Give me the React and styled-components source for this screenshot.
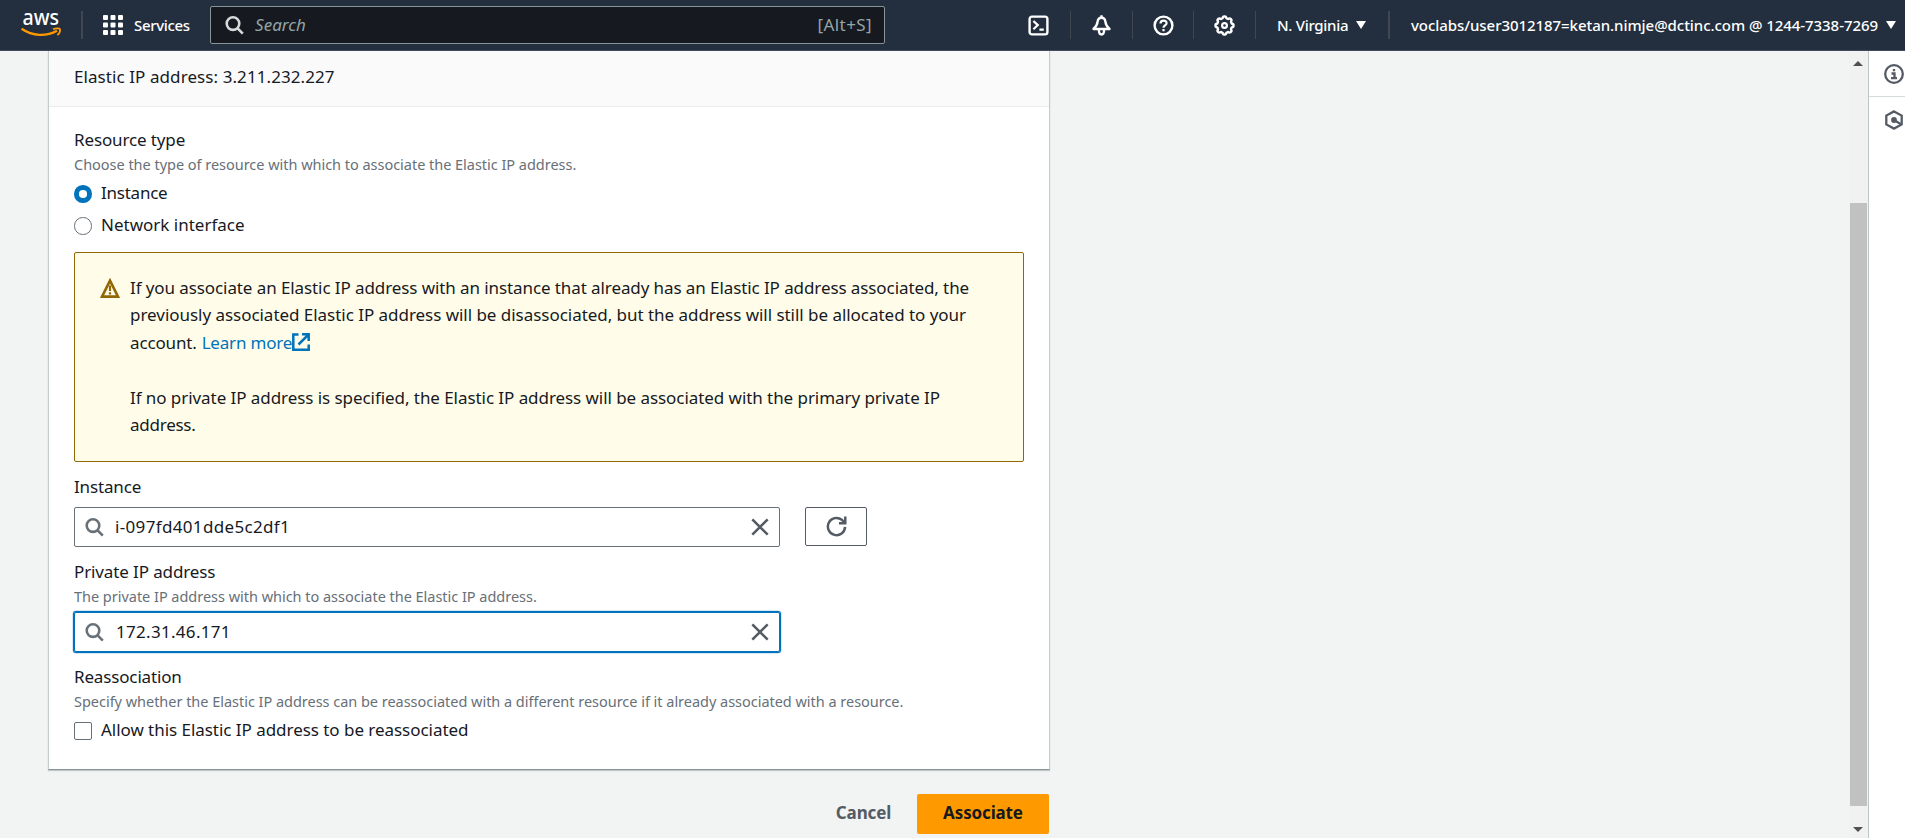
import React from 'react';
import styled, { createGlobalStyle, css } from 'styled-components';

const Global = createGlobalStyle`
  html, body { margin: 0; height: 100%; overflow: hidden; }
  * { box-sizing: border-box; }
  body { font-family: "Noto Sans", "Open Sans", sans-serif; font-size: 17px; line-height: 25px; color: #16191f; }
  button { font: inherit; }
`;

const Page = styled.div`
  display: flex;
  flex-direction: column;
  height: 838px;
  width: 1905px;
  overflow: hidden;
  background: #f2f3f3;
`;

/* Top navigation */
const TopBar = styled.header`
  display: flex;
  align-items: flex-start;
  height: 51px;
  flex: none;
  background: #232f3e;
  border-bottom: 1px solid #414d5c;
  color: #fff;
`;

const Logo = styled.svg`
  display: block;
  width: 41px;
  height: 34px;
  margin: 6px 19.5px 0 20.5px;
  overflow: visible;
`;

const LogoText = styled.text`
  font-family: "Noto Sans", sans-serif;
  font-size: 21.5px;
  font-weight: 500;
  fill: #fff;
`;

const Divider = styled.span`
  flex: none;
  width: ${(p) => p.$w || 1}px;
  height: 28px;
  margin-top: 11px;
  background: #414750;
`;

const ServicesButton = styled.button`
  display: flex;
  align-items: center;
  width: 127px;
  height: 50px;
  padding: 0 0 0 20px;
  border: 0;
  background: none;
  color: #fff;
  svg { flex: none; margin-right: 11px; }
`;

const NavText = styled.span`
  font-size: 15px;
  font-weight: 500;
  line-height: 24px;
  white-space: nowrap;
  letter-spacing: ${(p) => p.$ls || 0}px;
`;

const GlobalSearch = styled.div`
  display: flex;
  align-items: center;
  width: 675px;
  height: 38px;
  margin-top: 6px;
  padding: 0 12px 0 14px;
  background: #16191f;
  border: 1px solid #879596;
  border-radius: 2px;
  color: #95a5a6;
  svg { color: #d5dbdb; }
`;

const SearchHint = styled.span`
  flex: 1;
  padding: 0 0 2px 11px;
  font-style: italic;
  font-size: 17px;
  letter-spacing: 0.05px;
`;

const Shortcut = styled.span`
  padding-bottom: 2px;
  font-size: 17px;
  letter-spacing: 0.4px;
`;

const IconGroup = styled.div`
  display: flex;
  margin-left: 122px;
`;

const IconButton = styled.button`
  display: flex;
  align-items: center;
  justify-content: center;
  width: ${(p) => p.$w}px;
  height: 50px;
  padding: 1px 0 0;
  border: 0;
  background: none;
  color: #fff;
`;

const MenuButton = styled.button`
  display: flex;
  align-items: center;
  justify-content: space-between;
  width: ${(p) => p.$w}px;
  height: 50px;
  margin: 0 ${(p) => p.$right}px 0 21px;
  padding: 0;
  border: 0;
  background: none;
  color: #fff;
`;

/* Main area */
const Body = styled.div`
  display: flex;
  flex: 1;
  min-height: 0;
`;

const Content = styled.main`
  display: flex;
  flex-direction: column;
  flex: 1;
  padding-left: 48px;
`;

const Card = styled.section`
  width: 1002px;
  height: 719px;
  background: #fff;
  border: 1px solid #c5cccc;
  border-top: 0;
  border-bottom-color: #879596;
  box-shadow: 0 1px 1px rgba(0, 28, 36, 0.2);
`;

const CardHeader = styled.div`
  height: 56px;
  padding: 13px 25px 0;
  background: #fafafa;
  border-bottom: 1px solid #eaeded;
  letter-spacing: 0.08px;
`;

const CardBody = styled.div`
  display: flex;
  flex-direction: column;
  padding: 20px 25px 0;
`;

const FormField = styled.div`
  margin-top: ${(p) => p.$gap || 0}px;
`;

const Label = styled.div`
  height: 25px;
  white-space: nowrap;
  letter-spacing: ${(p) => p.$ls || 0}px;
`;

const Description = styled(Label)`
  font-size: 14.5px;
  color: #687078;
  letter-spacing: -0.026px;
`;

const Choice = styled.label`
  display: flex;
  align-items: flex-start;
  height: 25px;
  margin-top: ${(p) => p.$gap}px;
  white-space: nowrap;
  letter-spacing: ${(p) => p.$ls || 0}px;
`;

const Control = styled.span`
  width: 17.5px;
  height: 17.5px;
  margin: 5px 9.5px 0 0;
  background: #fff;
  border: 1px solid #687078;
  border-radius: ${(p) => (p.$round ? '50%' : '2px')};
  ${(p) => p.$checked && css`
    border: 5px solid #0073bb;
  `}
`;

const Alert = styled.div`
  display: flex;
  height: 210px;
  margin-top: 15px;
  padding: 20.6px 25px 0;
  background: #fffde9;
  border: 1px solid #906806;
  border-radius: 2px;
  line-height: 27.5px;
  svg { flex: none; }
`;

const AlertIcon = styled.span`
  width: 30px;
  padding-top: 4px;
`;

const AlertText = styled.div`
  p { margin: 0 0 27.5px; }
`;

const Line = styled.span`
  display: flex;
  align-items: center;
  height: 27.5px;
  white-space: nowrap;
  letter-spacing: ${(p) => p.$ls || 0}px;
`;

const Link = styled.a`
  display: flex;
  align-items: center;
  margin-left: 5px;
  color: #0073bb;
  letter-spacing: -0.19px;
`;

const InputRow = styled.div`
  display: flex;
  gap: 25px;
  margin-top: ${(p) => p.$gap}px;
`;

const SearchInput = styled.div`
  display: flex;
  align-items: center;
  width: 706px;
  height: 40px;
  padding: 0 10px;
  border: 1px solid #687078;
  border-radius: 2px;
  color: #687078;
  ${(p) => p.$focused && css`
    border-color: #0073bb;
    box-shadow: 0 0 0 1px #0073bb, 0 0 0 1.5px #a9cfe8;
  `}
`;

const Value = styled.span`
  flex: 1;
  padding: 0 0 2px ${(p) => p.$indent || 12}px;
  color: #16191f;
  letter-spacing: ${(p) => p.$ls}px;
`;

const RefreshButton = styled.button`
  display: flex;
  align-items: center;
  justify-content: center;
  width: 62px;
  height: 39px;
  padding: 0;
  background: #fff;
  border: 1px solid #545b64;
  border-radius: 2px;
  color: #545b64;
`;

const Actions = styled.div`
  display: flex;
  justify-content: flex-end;
  width: 1001px;
  margin-top: 24px;
`;

const ActionButton = styled.button`
  height: 40px;
  width: ${(p) => p.$w}px;
  padding: 0 0 3px;
  border: 0;
  border-radius: 2px;
  font-weight: 700;
  letter-spacing: -0.14px;
  color: ${(p) => (p.$primary ? '#16191f' : '#545b64')};
  background: ${(p) => (p.$primary ? '#ff9900' : 'transparent')};
`;

/* Scroll bar and help rail */
const Scrollbar = styled.div`
  display: flex;
  flex-direction: column;
  align-items: center;
  width: 19px;
  padding: 10px 1px 6px 0;
  background: #f1f1f1;
`;

const Thumb = styled.div`
  width: 17px;
  height: 603px;
  margin: 137px 0 auto;
  background: #c1c1c1;
`;

const Rail = styled.aside`
  width: 37px;
  background: #fff;
  border-left: 1px solid #bfc6c6;
  color: #545b64;
`;

const RailItem = styled.div`
  display: flex;
  justify-content: flex-end;
  height: 46px;
  padding: 13px 1px 0 0;
  ${(p) => p.$line && 'border-bottom: 1px solid #d5dbdb;'}
`;

const Caret = ({ up, w = 10, h = 8, fill = 'currentColor' }) => (
  <svg width={w} height={h} viewBox="0 0 10 8" preserveAspectRatio="none">
    <path d={up ? 'M0 8L5 0l5 8z' : 'M0 0h10L5 8z'} fill={fill} />
  </svg>
);

const Magnifier = () => (
  <svg width="19" height="19" viewBox="0 0 19 19" fill="none" stroke="currentColor" strokeWidth="2.6">
    <circle cx="8" cy="7.6" r="6.3" />
    <path d="M12.4 12.2l5.400 5.400" />
  </svg>
);

const Cross = () => (
  <svg width="18" height="18" viewBox="0 0 18 18" stroke="#545b64" strokeWidth="2.600">
    <path d="M1.300 1.300l15.400 15.400M16.700 1.300L1.300 16.700" />
  </svg>
);

const gearPath = (() => {
  const pts = [];
  for (let i = 0; i < 96; i += 1) {
    const a = (i / 96) * Math.PI * 2;
    const wave = Math.max(-1, Math.min(1, Math.cos(a * 8) * 1.7));
    const r = 8.2 + wave * 0.8;
    pts.push(`${(10.5 + r * Math.cos(a)).toFixed(2)} ${(10.5 + r * Math.sin(a)).toFixed(2)}`);
  }
  return `M${pts.join('L')}Z`;
})();

const NavIcon = ({ children }) => (
  <svg width="21" height="21" viewBox="0 0 21 21" fill="none" stroke="#fff" strokeWidth="2.4">
    {children}
  </svg>
);

function NavIcons() {
  return (
    <IconGroup>
      <IconButton $w={63}>
        <NavIcon>
          <rect x="1.6" y="1.6" width="17.8" height="17.8" rx="2.400" />
          <path d="M5.400 6l4.400 4.100-4.400 4.100M11.400 14.600h4.400" strokeWidth="2.200" />
        </NavIcon>
      </IconButton>
      <Divider />
      <IconButton $w={61}>
        <NavIcon>
          <path d="M10.500 2.700c-2.700 0-3.800 1.800-4 4.500-.2 2.800-1.600 4.600-4 6.800h16c-2.400-2.200-3.800-4-4-6.800-.2-2.700-1.300-4.500-4-4.500z" strokeLinejoin="round" />
          <path d="M10.500 .2v2.500M7.900 15c0 6 5.200 6 5.200 0" />
        </NavIcon>
      </IconButton>
      <Divider />
      <IconButton $w={60}>
        <NavIcon>
          <circle cx="10.500" cy="10.500" r="8.900" />
          <path d="M7.500 8.600c0-4 6.100-3.900 6.100-.4 0 2.200-3.100 2.300-3.100 4.500M10.500 14v2.300" strokeWidth="2.200" />
        </NavIcon>
      </IconButton>
      <Divider />
      <IconButton $w={61}>
        <NavIcon>
          <path d={gearPath} strokeLinejoin="round" />
          <circle cx="10.500" cy="10.500" r="2.400" strokeWidth="2.200" />
        </NavIcon>
      </IconButton>
      <Divider />
    </IconGroup>
  );
}

function Header() {
  return (
    <TopBar>
      <Logo viewBox="0 0 41 34">
        <LogoText x="1.500" y="18.500" textLength="36.500" lengthAdjust="spacingAndGlyphs">aws</LogoText>
        <path d="M.6 22.800c11 7.600 24.500 8 35.400 1.900" fill="none" stroke="#f90" strokeWidth="2.300" />
        <path d="M32 23.300c3-1.300 6.600-1.200 7-.2.300 1.500-.6 4.300-2.600 6.100" fill="none" stroke="#f90" strokeWidth="1.700" />
      </Logo>
      <Divider $w={2} />
      <ServicesButton>
        <svg width="20" height="20" viewBox="0 0 20 20" fill="#fff">
          {[0, 7.5, 15].map((y) => [0, 7.5, 15].map((x) => (
            <rect key={`${x}-${y}`} x={x} y={y} width="5" height="5" rx="1" />
          )))}
        </svg>
        <NavText $ls={-0.35}>Services</NavText>
      </ServicesButton>
      <GlobalSearch>
        <Magnifier />
        <SearchHint>Search</SearchHint>
        <Shortcut>[Alt+S]</Shortcut>
      </GlobalSearch>
      <NavIcons />
      <MenuButton $w={89} $right={22}>
        <NavText $ls={-0.3}>N. Virginia</NavText>
        <Caret />
      </MenuButton>
      <Divider $w={2} />
      <MenuButton $w={485} $right={0}>
        <NavText $ls={-0.055}>voclabs/user3012187=ketan.nimje@dctinc.com @ 1244-7338-7269</NavText>
        <Caret />
      </MenuButton>
    </TopBar>
  );
}

function AssociationAlert() {
  return (
    <Alert>
      <AlertIcon>
        <svg width="20" height="20" viewBox="0 0 20 20" fill="none" stroke="#906806">
          <path d="M10 2.600L18 18.600H2z" strokeWidth="2.600" />
          <path d="M10 7.500v5.500M10 14.300v2.200" strokeWidth="2.200" />
        </svg>
      </AlertIcon>
      <AlertText>
        <p>
          <Line $ls={-0.091}>If you associate an Elastic IP address with an instance that already has an Elastic IP address associated, the</Line>
          <Line $ls={-0.035}>previously associated Elastic IP address will be disassociated, but the address will still be allocated to your</Line>
          <Line $ls={-0.15}>
            account.
            <Link>
              Learn more
              <svg width="18" height="18" viewBox="0 0 18 18" fill="none" stroke="currentColor" strokeWidth="2.500">
                <path d="M6.500 1.600H1.300v15.200h15.400v-5.300M10 1.300h6.700V8M16.400 1.600L6.500 11.500" />
              </svg>
            </Link>
          </Line>
        </p>
        <p>
          <Line $ls={-0.062}>If no private IP address is specified, the Elastic IP address will be associated with the primary private IP</Line>
          <Line $ls={-0.25}>address.</Line>
        </p>
      </AlertText>
    </Alert>
  );
}

function AssociateForm() {
  return (
    <Card>
      <CardHeader>Elastic IP address: 3.211.232.227</CardHeader>
      <CardBody>
        <FormField>
          <Label $ls={-0.13}>Resource type</Label>
          <Description>Choose the type of resource with which to associate the Elastic IP address.</Description>
          <Choice $gap={3} $ls={-0.24}><Control $round $checked />Instance</Choice>
          <Choice $gap={7}><Control $round />Network interface</Choice>
        </FormField>
        <AssociationAlert />
        <FormField $gap={12}>
          <Label $ls={-0.15}>Instance</Label>
          <InputRow $gap={8}>
            <SearchInput>
              <Magnifier />
              <Value $indent={11} $ls={0.34}>i-097fd401dde5c2df1</Value>
              <Cross />
            </SearchInput>
            <RefreshButton>
              <svg width="21" height="21" viewBox="0 0 22 22" fill="none" stroke="currentColor" strokeWidth="2.600">
                <path d="M20 11.400a9 9 0 1 1-3.500-7.500l3 3" />
                <path d="M20.200 .6v7H13.600" />
              </svg>
            </RefreshButton>
          </InputRow>
        </FormField>
        <FormField $gap={12}>
          <Label $ls={-0.12}>Private IP address</Label>
          <Description>The private IP address with which to associate the Elastic IP address.</Description>
          <InputRow $gap={3}>
            <SearchInput $focused>
              <Magnifier />
              <Value $ls={0.3}>172.31.46.171</Value>
              <Cross />
            </SearchInput>
          </InputRow>
        </FormField>
        <FormField $gap={12}>
          <Label $ls={-0.15}>Reassociation</Label>
          <Description>Specify whether the Elastic IP address can be reassociated with a different resource if it already associated with a resource.</Description>
          <Choice $gap={3} $ls={-0.04}><Control />Allow this Elastic IP address to be reassociated</Choice>
        </FormField>
      </CardBody>
    </Card>
  );
}

export default function App() {
  return (
    <Page>
      <Global />
      <Header />
      <Body>
        <Content>
          <AssociateForm />
          <Actions>
            <ActionButton $w={107}>Cancel</ActionButton>
            <ActionButton $w={132} $primary>Associate</ActionButton>
          </Actions>
        </Content>
        <Scrollbar>
          <Caret up w={10} h={5} fill="#505050" />
          <Thumb />
          <Caret w={10} h={5} fill="#505050" />
        </Scrollbar>
        <Rail>
          <RailItem $line>
            <svg width="20" height="20" viewBox="0 0 20 20" fill="none" stroke="currentColor" strokeWidth="2.300">
              <circle cx="10" cy="10" r="8.800" />
              <path d="M10 5v2.300M7.500 9.500h3v4.500M7 14.200h6" />
            </svg>
          </RailItem>
          <RailItem>
            <svg width="20" height="20" viewBox="0 0 20 20" fill="none" stroke="currentColor" strokeWidth="2.300">
              <path d="M10 1.400l7.700 4.200v8.800L10 18.600l-7.700-4.200V5.600z" />
              <circle cx="10" cy="10" r="2.900" fill="currentColor" stroke="none" />
              <path d="M10 10l7 4.200" />
            </svg>
          </RailItem>
        </Rail>
      </Body>
    </Page>
  );
}
